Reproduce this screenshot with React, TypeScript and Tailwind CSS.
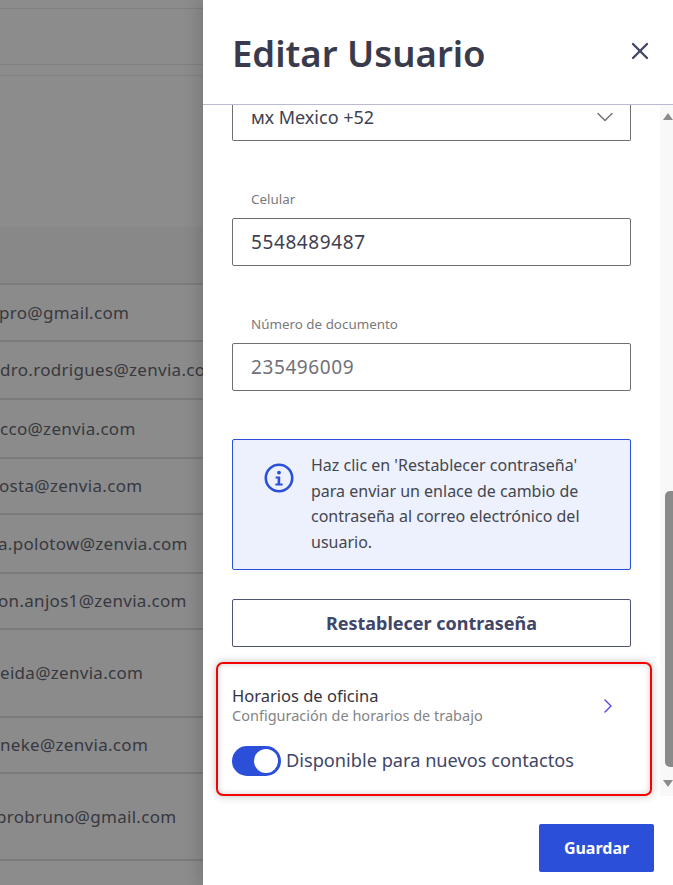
import React from 'react';
import { X, ChevronDown, ChevronRight } from 'lucide-react';

const rows = [
  { email: 'pro@gmail.com', height: 'h-[57px]', offset: '-ml-[1px]' },
  { email: 'dro.rodrigues@zenvia.com', height: 'h-[58px]', offset: 'ml-0' },
  { email: 'cco@zenvia.com', height: 'h-[59px]', offset: 'ml-0' },
  { email: 'osta@zenvia.com', height: 'h-[56px]', offset: '-ml-[1px]' },
  { email: 'a.polotow@zenvia.com', height: 'h-[59px]', offset: '-ml-[2px]' },
  { email: 'on.anjos1@zenvia.com', height: 'h-[56px]', offset: '-ml-[2px]' },
  { email: 'eida@zenvia.com', height: 'h-[88px]', offset: 'ml-0' },
  { email: 'neke@zenvia.com', height: 'h-[56px]', offset: 'ml-0' },
  { email: 'probruno@gmail.com', height: 'h-[87px]', offset: '-ml-[4px]' },
];

function Backdrop() {
  return (
    <div className="h-full w-[203px] shrink-0 overflow-hidden bg-[#8c8c8c]">
      <div className="mt-2 h-[57px] border-y border-[#808080]" />
      <div className="h-[11px] border-b border-[#808080]" />
      <div className="h-[151px]" />
      <div className="h-[58px] border-b-2 border-[#7b7c7b] bg-[#878887]" />
      {rows.map((row) => (
        <div
          key={row.email}
          className={`flex items-center border-b-2 border-[#7b7b7b] bg-[#8b8b8b] text-[17px] tracking-[0.3px] whitespace-nowrap text-[#38383f] ${row.height}`}
        >
          <span className={row.offset}>{row.email}</span>
        </div>
      ))}
    </div>
  );
}

function Field({ label, value, muted }: { label: string; value: string; muted?: boolean }) {
  return (
    <div className="flex flex-col">
      <span className="h-[28px] pl-[19px] text-[13.4px] leading-[18px] text-[#7a7a7a]">{label}</span>
      <div
        className={`flex h-[48px] items-center rounded-[2px] border border-[#6f6f6f] px-[18px] text-[19px] tracking-[0.6px] ${
          muted ? 'text-[#71717a]' : 'text-[#3f4152]'
        }`}
      >
        {value}
      </div>
    </div>
  );
}

function Scrollbar() {
  return (
    <div className="flex w-[13px] shrink-0 flex-col items-end bg-[#f8f8f8]">
      <div className="mt-[8px] h-0 w-0 border-x-[5px] border-b-[7px] border-x-transparent border-b-[#8c8c8c]" />
      <div className="mt-[371px] h-[276px] w-[8px] rounded-l-[5px] bg-[#8a8a8a]" />
      <div className="mt-[13px] h-0 w-0 border-x-[5px] border-t-[7px] border-x-transparent border-t-[#8c8c8c]" />
    </div>
  );
}

export default function App() {
  return (
    <div className="flex h-[885px] w-[673px] overflow-hidden font-['Noto_Sans',sans-serif]">
      <Backdrop />
      <div className="relative flex min-w-0 flex-1 flex-col bg-white shadow-[-6px_0_14px_rgba(0,0,0,0.12)]">
        <header className="flex h-[105px] shrink-0 items-start justify-between border-b border-[#b9b9d2] pt-[26px] pr-[19px] pl-[29px]">
          <h1 className="text-[36.5px] leading-[54px] font-semibold text-[#393b4d]">Editar Usuario</h1>
          <X className="mt-[11px] h-[28px] w-[28px] text-[#3f4668]" strokeWidth={2} />
        </header>

        <div className="flex h-[691px] shrink-0">
          <div className="flex w-[457px] flex-col px-[29px]">
            <div className="flex h-[36px] items-start justify-between rounded-b-[2px] border border-t-0 border-[#6f6f6f] pr-[11px] pl-[18px] text-[18px] leading-[24px] text-[#3f4152]">
              <span>мх Mexico +52</span>
              <ChevronDown className="-mt-[2px] h-[28px] w-[28px] text-[#757575]" strokeWidth={1.3} />
            </div>

            <div className="mt-[49px]">
              <Field label="Celular" value="5548489487" />
            </div>
            <div className="mt-[49px]">
              <Field label="Número de documento" value="235496009" muted />
            </div>

            <div className="mt-[48px] flex h-[131px] rounded-[2px] border border-[#2b4fd8] bg-[#ecf1fd] pt-[13px] pr-[28px] pl-[31px]">
              <svg viewBox="0 0 30 30" className="mt-[10px] h-[30px] w-[30px] shrink-0" fill="none">
                <circle cx="15" cy="15" r="13.2" stroke="#2b4fd8" strokeWidth="2.6" />
                <circle cx="15" cy="9.6" r="1.9" fill="#2b4fd8" />
                <path d="M11.6 13.4h4.6v7h2.4v2.2h-7.2v-2.2h2.2v-4.8h-2z" fill="#2b4fd8" />
              </svg>
              <p className="ml-[17px] text-[16px] leading-[25.5px] text-[#44464f]">
                Haz clic en 'Restablecer contraseña' para enviar un enlace de cambio de contraseña al correo electrónico del usuario.
              </p>
            </div>

            <button className="mt-[29px] h-[48px] shrink-0 rounded-[2px] border border-[#4d5474] text-[18px] font-bold text-[#3f4668]">
              Restablecer contraseña
            </button>

            <section className="-mr-[21px] -ml-[16px] mt-[15px] flex h-[134px] shrink-0 flex-col rounded-[7px] border-2 border-[#f60000] bg-white px-[14px] pt-[22px] shadow-[0_0_8px_rgba(0,0,0,0.25),inset_0_0_6px_rgba(0,0,0,0.18)]">
              <div className="flex items-center justify-between pr-[16px]">
                <div className="flex flex-col">
                  <span className="text-[16.5px] leading-[20px] text-[#33343d]">Horarios de oficina</span>
                  <span className="text-[14.5px] leading-[19px] text-[#848484]">Configuración de horarios de trabajo</span>
                </div>
                <ChevronRight className="h-[24px] w-[24px] text-[#4f46e5]" strokeWidth={1.4} />
              </div>
              <div className="mt-[21px] flex items-center gap-[5px]">
                <div className="flex h-[30px] w-[49px] items-center justify-end rounded-full bg-[#2b4fd8] pr-[3px]">
                  <div className="h-[24px] w-[24px] rounded-full bg-white" />
                </div>
                <span className="text-[18.2px] text-[#3f4668]">Disponible para nuevos contactos</span>
              </div>
            </section>
          </div>
          <Scrollbar />
        </div>

        <footer className="flex flex-1 items-start justify-end pt-[28px] pr-[19px]">
          <button className="h-[48px] w-[115px] rounded-[2px] bg-[#2b4fd8] text-[16px] font-bold text-white">
            Guardar
          </button>
        </footer>
      </div>
    </div>
  );
}
